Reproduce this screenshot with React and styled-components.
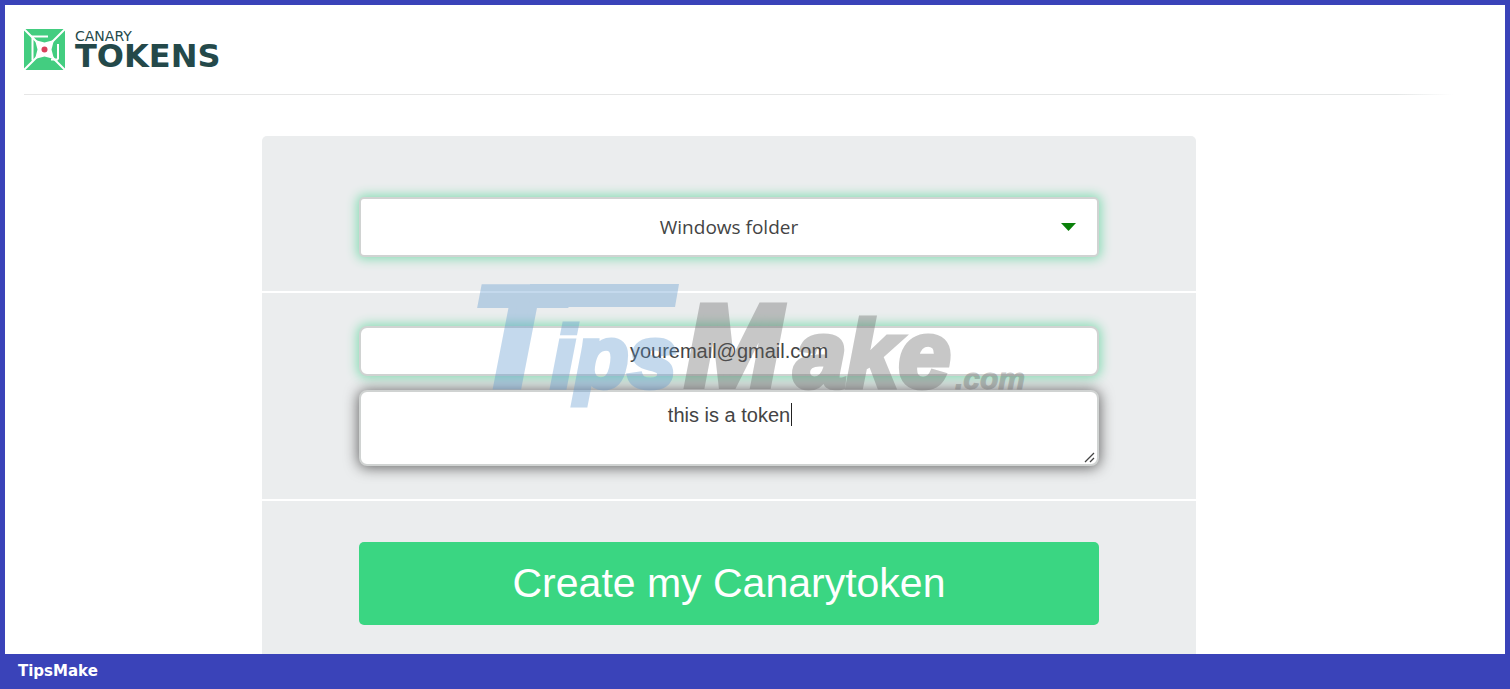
import React from "react";
import styled, { createGlobalStyle, css } from "styled-components";

const sans = '"Liberation Sans", Arial, sans-serif';

const GlobalStyle = createGlobalStyle`
  *, *::before, *::after { box-sizing: border-box; }
  body { margin: 0; background: #fff; font-family: ${sans}; }
`;

const Page = styled.div`
  display: flex;
  flex-direction: column;
  min-height: 100vh;
`;

const Frame = styled.div`
  display: flex;
  flex: 1;
  flex-direction: column;
  border: 5px solid #3a43b9;
  border-bottom: 0;
`;

const Header = styled.header`
  padding: 24px 52px 0 19px;
`;

const Brand = styled.a`
  display: flex;
  align-items: center;
  gap: 10px;
  height: 40px;
  color: #24494a;
  text-decoration: none;
`;

const BrandIcon = styled.svg`
  width: 41px;
  height: 41px;
`;

const Wordmark = styled.span`
  display: flex;
  flex-direction: column;
  font-family: "DejaVu Sans", sans-serif;
`;

const WordTop = styled.span`
  font-size: 14px;
  line-height: 14px;
`;

const WordMain = styled.span`
  font-size: 32px;
  font-weight: 700;
  line-height: 26px;
`;

const Rule = styled.hr`
  height: 1px;
  margin: 25px 0 0;
  border: 0;
  background: linear-gradient(90deg, #e6e6e6 0%, #e4e6e6 96%, #fff 100%);
`;

const Main = styled.main`
  display: flex;
  flex: 1;
  justify-content: center;
  padding: 41px 52px 0 0;
`;

const Card = styled.form`
  position: relative;
  width: 100%;
  max-width: 934px;
  border-radius: 5px 5px 0 0;
  background: #ebedee;
`;

const Section = styled.section`
  display: flex;
  flex-direction: column;
  gap: 14px;
  padding: ${(p) => p.$pad};
  border-bottom: ${(p) => (p.$last ? "0" : "2px solid #fff")};
`;

const Field = styled.label`
  position: relative;
  display: block;
`;

const control = css`
  display: block;
  width: 100%;
  margin: 0;
  border: 2px solid #d0d3d2;
  border-radius: 8px;
  outline: 0;
  background: #fff;
  color: #444;
  font-family: ${sans};
  font-size: 20px;
  text-align: center;
`;

const glow = css`
  box-shadow: 0 0 11px 2px #86dcb4;
`;

const TypeSelect = styled.select`
  ${control}
  ${glow}
  appearance: none;
  height: 60px;
  border-radius: 5px;
  font-family: "Open Sans", "Noto Sans", sans-serif;
  font-size: 19px;
  text-align-last: center;
`;

const Arrow = styled.svg`
  position: absolute;
  top: 26px;
  right: 23px;
  width: 15px;
  height: 8px;
  pointer-events: none;
`;

const EmailInput = styled.input`
  ${control}
  ${glow}
  height: 50px;
`;

const NoteArea = styled.textarea`
  ${control}
  height: 76px;
  padding: 11px;
  line-height: 24px;
  resize: none;
  box-shadow: 0 1px 14px 1px #666;
`;

const Grip = styled.svg`
  position: absolute;
  right: 4px;
  bottom: 3px;
  width: 11px;
  height: 11px;
  pointer-events: none;
`;

const Caret = styled.span`
  position: absolute;
  top: 13px;
  left: calc(50% + 62px);
  width: 1px;
  height: 23px;
  background: #222;
`;

const CreateButton = styled.button`
  height: 83px;
  border: 0;
  border-radius: 5px;
  background: #3ad682;
  color: #fff;
  font-family: ${sans};
  font-size: 41px;
`;

const Watermark = styled.svg`
  position: absolute;
  top: 139px;
  left: calc(50% - 259px);
  width: 560px;
  height: 140px;
  overflow: visible;
  pointer-events: none;
  font-family: ${sans};
  font-weight: 700;
  font-style: italic;
`;

const Footer = styled.footer`
  height: 35px;
  padding: 0 18px;
  background: #3a43b9;
  color: #fff;
  font-family: "DejaVu Sans", sans-serif;
  font-size: 15px;
  font-weight: 700;
  line-height: 34px;
`;

function CanaryMark() {
  return (
    <BrandIcon viewBox="0 0 41 41" aria-hidden="true">
      <rect width="41" height="41" rx="2" fill="#43cd80" />
      <g fill="none" stroke="#fff" strokeWidth="2">
        <path d="M0 0l41 41M41 0L0 41" />
        <path d="M24 7.500H8.500v24M34 15v15.500" />
        <path d="M27 30.500h7" />
      </g>
      <path d="M11 11l9.500 2.500L30 11l-2.500 9.500L30 30l-9.500-2.500L11 30l2.500-9.500z" fill="#fff" />
      <circle cx="20.500" cy="20.500" r="3" fill="#d9415c" />
    </BrandIcon>
  );
}

function TipsMakeMark() {
  return (
    <Watermark viewBox="0 0 560 140" aria-hidden="true">
      <g opacity="0.35">
        <g fill="#5995ce" stroke="#5995ce">
          <text x="2" y="110" fontSize="141" strokeWidth="8">T</text>
          <path d="M60 9H209L205 32H60z" stroke="none" />
          <text x="81" y="112" fontSize="87" strokeWidth="5">ips</text>
        </g>
        <g fill="#616161" stroke="#616161">
          <text x="215" y="111" fontSize="116" strokeWidth="6">M</text>
          <text x="324" y="112" fontSize="94" strokeWidth="5">ake</text>
          <text x="485" y="114" fontSize="30" strokeWidth="1">.com</text>
        </g>
      </g>
    </Watermark>
  );
}

export default function App() {
  return (
    <Page>
      <GlobalStyle />
      <Frame>
        <Header>
          <Brand href="#">
            <CanaryMark />
            <Wordmark>
              <WordTop>CANARY</WordTop>
              <WordMain>TOKENS</WordMain>
            </Wordmark>
          </Brand>
          <Rule />
        </Header>
        <Main>
          <Card onSubmit={(e) => e.preventDefault()}>
            <Section $pad="61px 97px 34px">
              <Field>
                <TypeSelect aria-label="Token type" defaultValue="folder">
                  <option value="folder">Windows folder</option>
                </TypeSelect>
                <Arrow viewBox="0 0 15 8" aria-hidden="true">
                  <path d="M0 0H15L7.500 8z" fill="#0a800a" />
                </Arrow>
              </Field>
            </Section>
            <Section $pad="33px 97px 33px">
              <Field>
                <EmailInput type="email" aria-label="Email" defaultValue="youremail@gmail.com" />
              </Field>
              <Field>
                <NoteArea aria-label="Reminder note" defaultValue="this is a token" />
                <Caret />
                <Grip viewBox="0 0 11 11" aria-hidden="true">
                  <path d="M1 10L10 1M6 10l4-4" stroke="#444" strokeWidth="1.300" />
                </Grip>
              </Field>
            </Section>
            <Section $pad="41px 97px 29px" $last>
              <CreateButton type="submit">Create my Canarytoken</CreateButton>
            </Section>
            <TipsMakeMark />
          </Card>
        </Main>
      </Frame>
      <Footer>TipsMake</Footer>
    </Page>
  );
}
